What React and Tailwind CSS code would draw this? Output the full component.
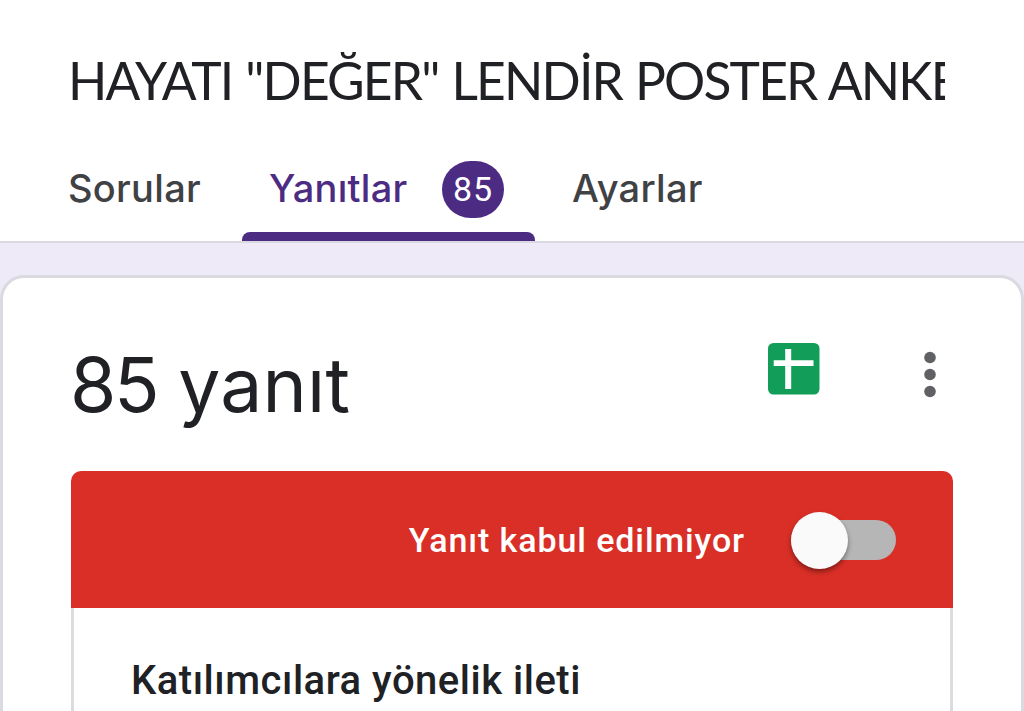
import React, { useState } from "react";

const TABS = [
  { id: "sorular", label: "Sorular", tabClass: "ml-[41px] w-[187px] pl-[27px]" },
  { id: "yanitlar", label: "Yanıtlar", count: 85, tabClass: "ml-[14px] w-[293px] pl-[27px]" },
  { id: "ayarlar", label: "Ayarlar", tabClass: "w-[200px] pl-[37px]" },
];

function Tab({ tab, active, onSelect }) {
  return (
    <button
      type="button"
      onClick={onSelect}
      className={`${tab.tabClass} relative flex h-full items-center whitespace-nowrap font-['Inter',sans-serif] text-[38px] font-medium tracking-[0.3px] ${
        active ? "text-[#4c2b83]" : "text-[#3f4144]"
      }`}
    >
      <span>{tab.label}</span>
      {tab.count && (
        <span className="absolute left-[200px] top-[25px] flex h-[57px] w-[62px] items-center justify-center rounded-full bg-[#4c2b83] font-['Roboto',sans-serif] text-[34px] font-normal tracking-[1px] text-white">
          {tab.count}
        </span>
      )}
      {active && <span className="absolute bottom-0 left-0 h-[9px] w-full rounded-t-lg bg-[#4c2b83]" />}
    </button>
  );
}

function SheetsIcon() {
  return (
    <svg width="52" height="52" viewBox="0 0 52 52" aria-hidden="true">
      <rect width="51.5" height="51.5" rx="5.5" fill="#129d58" />
      <path d="M17.2 6h6v11.2h22.3v5.9H23.2v23h-6v-23H5.7v-5.9h11.5z" fill="#fff" />
    </svg>
  );
}

function MoreIcon() {
  return (
    <svg width="12" height="48" viewBox="0 0 12 48" fill="#5f6164" aria-hidden="true">
      <circle cx="6" cy="6.5" r="5.8" />
      <circle cx="6" cy="23.5" r="5.8" />
      <circle cx="6" cy="40.5" r="5.8" />
    </svg>
  );
}

export default function App() {
  const [activeTab, setActiveTab] = useState("yanitlar");
  const [accepting, setAccepting] = useState(false);

  return (
    <div className="flex h-[711px] w-[1024px] flex-col overflow-hidden bg-[#eeeaf8] font-['Lato','Open_Sans',sans-serif] text-[#202124]">
      {/* Form title and tabs */}
      <header className="h-[243px] shrink-0 border-b-2 border-[#dad8e1] bg-white pt-[44px]">
        <h1 className="ml-[68px] h-[92px] w-[877px] overflow-hidden whitespace-nowrap text-[51.5px] leading-[72px] tracking-[-1.8px] [word-spacing:1.5px]">
          HAYATI "DEĞER" LENDİR POSTER ANKETİ
        </h1>
        <nav className="flex h-[105px]">
          {TABS.map((tab) => (
            <Tab key={tab.id} tab={tab} active={activeTab === tab.id} onSelect={() => setActiveTab(tab.id)} />
          ))}
        </nav>
      </header>

      {/* Responses card */}
      <main className="mt-8 flex-1 rounded-t-[24px] border-[3px] border-b-0 border-[#dadae0] bg-white px-[68px]">
        <div className="flex h-[193px]">
          <h2 className="flex-1 whitespace-nowrap pt-[61px] font-['Inter',sans-serif] text-[75px] leading-[92px]">
            <span className="-ml-px tracking-[-2.5px]">85</span>
            <span className="tracking-[0.2px]"> yanıt</span>
          </h2>
          <button type="button" aria-label="E-Tablolar" className="mt-[65px] h-[52px]">
            <SheetsIcon />
          </button>
          <button type="button" aria-label="Diğer" className="ml-[104px] mr-[17px] mt-[73px] h-[48px]">
            <MoreIcon />
          </button>
        </div>

        <section className="w-[882px]">
          <div className="flex h-[137px] items-center justify-end rounded-t-[10px] bg-[#d92f26] pr-[57px] pt-px">
            <span className="font-['Roboto',sans-serif] text-[34px] font-medium tracking-[0.9px] text-white">
              Yanıt kabul edilmiyor
            </span>
            <button
              type="button"
              role="switch"
              aria-checked={accepting}
              aria-label="Yanıt kabul ediliyor"
              onClick={() => setAccepting(!accepting)}
              className={`ml-[46px] flex h-10 w-[105px] items-center rounded-full bg-[#b6b6b6] ${
                accepting ? "justify-end" : "justify-start"
              }`}
            >
              <span className="size-[57px] rounded-full bg-[#fafafa] shadow-[0_3px_5px_rgba(0,0,0,0.4)]" />
            </button>
          </div>
          <div className="h-[110px] border-x-[3px] border-[#dadce0] pl-[57px] pt-[45px]">
            <h3 className="whitespace-nowrap font-['Roboto',sans-serif] text-[40px] font-medium leading-[56px] tracking-[0.5px]">
              Katılımcılara yönelik ileti
            </h3>
          </div>
        </section>
      </main>
    </div>
  );
}
